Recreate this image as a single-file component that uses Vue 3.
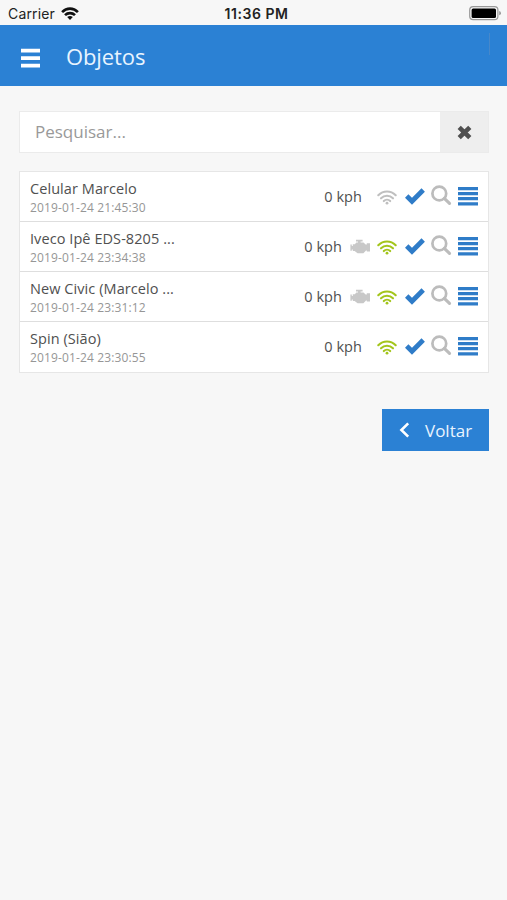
<script setup>
const items = [
  { name: 'Celular Marcelo', date: '2019-01-24 21:45:30', engine: false, online: false },
  { name: 'Iveco Ipê EDS-8205 ...', date: '2019-01-24 23:34:38', engine: true, online: true },
  { name: 'New Civic (Marcelo ...', date: '2019-01-24 23:31:12', engine: true, online: true },
  { name: 'Spin (Sião)', date: '2019-01-24 23:30:55', engine: false, online: true },
]
</script>

<template>
  <div class="screen">
    <div class="status">
      <div class="carrier">
        <span>Carrier</span>
        <svg class="status-wifi" viewBox="0 0 18 13" width="18" height="13">
          <g fill="none" stroke="#111" stroke-width="2.6">
            <path d="M1.1 5.1C5.6 0.5 12.4 0.5 16.9 5.1" />
            <path d="M4 8.2C6.8 5.4 11.2 5.4 14 8.2" />
          </g>
          <path d="M6.2 10.1Q9 7.7 11.8 10.1L9 12.9Z" fill="#111" />
        </svg>
      </div>
      <span class="clock">11:36 PM</span>
      <svg class="battery" viewBox="0 0 33 15" width="33" height="15">
        <rect x="0.7" y="0.7" width="28.2" height="13" rx="3.4" fill="#f7f7f7" stroke="#999" stroke-width="1.2" />
        <rect x="2.6" y="2.5" width="24.4" height="9.4" rx="1.5" fill="#000" />
        <path d="M30.2 5.1Q32 5.5 32 7.2T30.2 9.3Z" fill="#999" />
      </svg>
    </div>

    <header class="header">
      <svg class="menu" viewBox="0 0 19 20" width="19" height="20">
        <path d="M0 2.6H19M0 10.1H19M0 17.6H19" stroke="#fff" stroke-width="3.7" />
      </svg>
      <h1>Objetos</h1>
      <i class="divider"></i>
    </header>

    <main>
      <div class="search">
        <div class="field">Pesquisar...</div>
        <div class="clear">
          <svg viewBox="0 0 15 15" width="15" height="15">
            <path d="M2.2 2.4L12.8 12.6M12.8 2.4L2.2 12.6" stroke="#505050" stroke-width="4.6" />
          </svg>
        </div>
      </div>

      <ul class="list">
        <li v-for="item in items" :key="item.name">
          <div class="info">
            <div class="name">{{ item.name }}</div>
            <div class="date">{{ item.date }}</div>
          </div>
          <div class="speed">0 kph</div>
          <svg v-if="item.engine" class="engine" viewBox="0 0 20 16" width="20" height="16">
            <path
              d="M6 0.8H12.6V2.4H10.6V3.6H13.5L15.6 5.4H16.8V4.2H20V12.6H16.8V11.6H16L13.4 14.2H7.6L4.6 12H2.8V10.4H1.8V11.8H0.4V5.6H1.8V7H2.8V5.2H4.8L6.4 3.6H8V2.4H6Z"
              fill="#c8c8c8"
            />
          </svg>
          <svg
            class="wifi"
            :class="{ online: item.online }"
            viewBox="0 0 20 15"
            width="20"
            height="15"
          >
            <g fill="none" stroke="currentColor" stroke-width="2.1" stroke-linecap="round">
              <path d="M1.3 5.2C6.3 0.3 13.7 0.3 18.7 5.2" />
              <path d="M4 8.3C7.5 4.9 12.5 4.9 16 8.3" />
              <path d="M6.8 11.1C8.6 9.3 11.4 9.3 13.2 11.1" />
            </g>
            <circle cx="10" cy="13.2" r="1.4" fill="currentColor" />
          </svg>
          <svg class="check" viewBox="0 0 20 17" width="20" height="17">
            <path d="M1.7 8L7 13.3L18.2 2" fill="none" stroke="#2f7cc8" stroke-width="4.8" />
          </svg>
          <svg class="lens" viewBox="0 0 21 21" width="21" height="21">
            <circle cx="8.3" cy="8.5" r="6.9" fill="none" stroke="#bcbcbc" stroke-width="2.7" />
            <path d="M13.3 13.4L18.5 18.3" stroke="#bcbcbc" stroke-width="3.2" stroke-linecap="round" />
          </svg>
          <svg class="bars" viewBox="0 0 20 19" width="20" height="19">
            <path d="M0 1.5H20M0 6.6H20M0 11.7H20M0 16.8H20" stroke="#2f7cc8" stroke-width="3.3" />
          </svg>
        </li>
      </ul>

      <button class="back">
        <svg viewBox="0 0 11 16" width="11" height="16">
          <path d="M9.2 1.4L2.4 8L9.2 14.6" fill="none" stroke="#fff" stroke-width="2.6" />
        </svg>
        <span>Voltar</span>
      </button>
    </main>
  </div>
</template>

<style>
body {
  margin: 0;
  background: #f7f7f7;
}
</style>

<style scoped>
.screen {
  box-sizing: border-box;
  width: 507px;
  height: 900px;
  overflow: hidden;
  background: #f7f7f7;
  color: #505050;
  font-family: 'Open Sans', 'Noto Sans', sans-serif;
}
svg {
  display: block;
  flex: none;
}
.status {
  display: grid;
  grid-template-columns: 1fr auto 1fr;
  align-items: center;
  box-sizing: border-box;
  height: 25px;
  padding: 2px 5px 0 8px;
  color: #222;
  font: 14px/20px Inter, sans-serif;
}
.carrier {
  display: flex;
  align-items: center;
  gap: 6px;
  letter-spacing: 0.15px;
}
.carrier svg {
  margin-top: -1px;
}
.clock {
  font-weight: 600;
  padding-left: 3px;
  letter-spacing: 0.55px;
}
.battery {
  justify-self: end;
}
.header {
  display: flex;
  align-items: center;
  box-sizing: border-box;
  height: 61px;
  padding: 2px 17px 0 21px;
  background: #2b81d4;
  color: #e8f4ff;
}
.menu {
  margin-top: 3px;
}
h1 {
  margin: -2px auto 0 26px;
  font-size: 22px;
  font-weight: 400;
  letter-spacing: -0.1px;
  line-height: 30px;
}
.divider {
  width: 1px;
  height: 22px;
  margin-bottom: 25px;
  background: #4788ca;
}
main {
  padding: 25px 18px 0 19px;
}
.search {
  display: flex;
  box-sizing: border-box;
  height: 42px;
  border: 1px solid #ebebeb;
  background: #fff;
}
.field {
  flex: 1;
  padding-left: 15px;
  color: #999;
  font-size: 17px;
  line-height: 39px;
}
.clear {
  display: grid;
  place-items: center;
  width: 48px;
  background: #eee;
}
.list {
  margin: 18px 0 0;
  padding: 0;
  list-style: none;
  background: #fff;
  border: 1px solid #e6e6e6;
}
li {
  display: flex;
  align-items: flex-start;
  box-sizing: border-box;
  height: 50px;
  padding: 0 10px;
  border-bottom: 1px solid #dedede;
}
li:last-child {
  height: 50px;
  border-bottom: 0;
}
.info {
  flex: 1;
}
.name {
  padding-top: 7px;
  font-size: 14.5px;
  letter-spacing: 0.07px;
  line-height: 20px;
}
.date {
  color: #969696;
  font-size: 12px;
  letter-spacing: 0.13px;
  line-height: 18px;
}
.speed {
  margin-top: 15px;
  font-size: 14.5px;
  letter-spacing: 0.05px;
  line-height: 20px;
}
.engine {
  margin: 17px 0 0 8px;
}
.wifi {
  margin: 18px 0 0 15px;
  color: #bfbfbf;
}
.engine + .wifi {
  margin-left: 7px;
}
.wifi.online {
  color: #a3c51c;
}
.check {
  margin: 16px 0 0 8px;
}
.lens {
  margin: 13px 0 0 6px;
}
.bars {
  margin: 15px 0 0 6px;
}
.back {
  display: flex;
  align-items: center;
  gap: 15px;
  box-sizing: border-box;
  width: 107px;
  height: 42px;
  margin: 36px 0 0 auto;
  padding: 0 0 0 17px;
  border: 0;
  background: #2b81d4;
  color: #e8f4ff;
  font: 17px/24px 'Open Sans', sans-serif;
}
.back span {
  padding-top: 2px;
}
</style>
